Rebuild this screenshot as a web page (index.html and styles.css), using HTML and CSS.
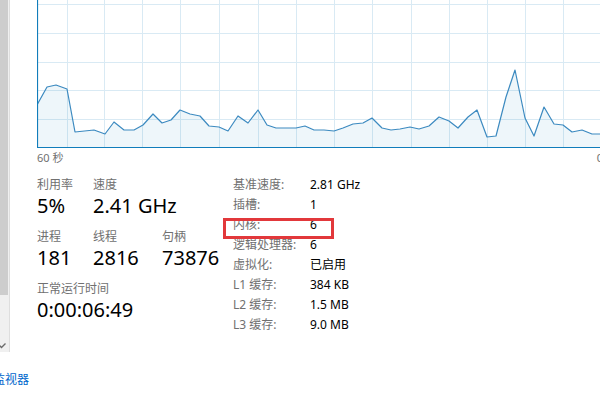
FILE: index.html
```html
<!DOCTYPE html>
<html lang="zh-CN">
<head>
<meta charset="utf-8">
<title>CPU</title>
<link rel="stylesheet" href="styles.css">
</head>
<body>
<div class="top">
  <aside class="sidebar">
    <div class="thumb"></div>
    <div class="track">
      <svg class="arrow" width="7" height="6" viewBox="0 0 7 6"><polyline points="0.5,2.5 2.5,4.5 6.5,0.5" fill="none" stroke="#6a6a6a" stroke-width="1.4"/></svg>
    </div>
  </aside>
  <main class="main">
    <svg class="chart" width="566" height="148" viewBox="37 0 566 148">
      <g class="grid" stroke="#d9eaf4" stroke-width="1">
        <line x1="37" y1="4.5" x2="603" y2="4.5"/>
        <line x1="37" y1="33.5" x2="603" y2="33.5"/>
        <line x1="37" y1="62.5" x2="603" y2="62.5"/>
        <line x1="37" y1="90.5" x2="603" y2="90.5"/>
        <line x1="37" y1="119.5" x2="603" y2="119.5"/>
        <line x1="67.5" y1="0" x2="67.5" y2="148"/>
        <line x1="104.5" y1="0" x2="104.5" y2="148"/>
        <line x1="142.5" y1="0" x2="142.5" y2="148"/>
        <line x1="180.5" y1="0" x2="180.5" y2="148"/>
        <line x1="219.5" y1="0" x2="219.5" y2="148"/>
        <line x1="258.5" y1="0" x2="258.5" y2="148"/>
        <line x1="296.5" y1="0" x2="296.5" y2="148"/>
        <line x1="334.5" y1="0" x2="334.5" y2="148"/>
        <line x1="372.5" y1="0" x2="372.5" y2="148"/>
        <line x1="411.5" y1="0" x2="411.5" y2="148"/>
        <line x1="449.5" y1="0" x2="449.5" y2="148"/>
        <line x1="487.5" y1="0" x2="487.5" y2="148"/>
        <line x1="525.5" y1="0" x2="525.5" y2="148"/>
        <line x1="563.5" y1="0" x2="563.5" y2="148"/>
      </g>
      <polygon fill="rgba(17,125,187,0.07)" points="37,105 47,87 56,85 67,89 75,132 94,130 105,134 114,122 124,130 134,130 143,125 153,114 162,123 171,120 180,110 190,114 200,116 209,126 219,127 228,131 238,116 248,123 258,110 267,125 276,128 286,128 296,128 305,126 314,130 324,130 334,131 343,128 353,124 363,123 372,118 382,128 391,130 400,129 410,127 419,129 429,126 439,117 449,121 458,128 468,117 477,110 487,137 496,136 506,97 515,70 525,118 534,136 544,107 554,124 563,125 572,132 582,130 592,134 603,134 603,147 37,147"/>
      <polyline fill="none" stroke="#3c8ac0" stroke-width="1.2" stroke-linejoin="round" points="37,105 47,87 56,85 67,89 75,132 94,130 105,134 114,122 124,130 134,130 143,125 153,114 162,123 171,120 180,110 190,114 200,116 209,126 219,127 228,131 238,116 248,123 258,110 267,125 276,128 286,128 296,128 305,126 314,130 324,130 334,131 343,128 353,124 363,123 372,118 382,128 391,130 400,129 410,127 419,129 429,126 439,117 449,121 458,128 468,117 477,110 487,137 496,136 506,97 515,70 525,118 534,136 544,107 554,124 563,125 572,132 582,130 592,134 603,134"/>
      <line x1="37.5" y1="0" x2="37.5" y2="148" stroke="#117dbb" stroke-width="1.2"/>
      <line x1="37" y1="147.5" x2="603" y2="147.5" stroke="#117dbb" stroke-width="1.2"/>
    </svg>
    <div class="axis">
      <span>60 秒</span>
      <span>0</span>
    </div>
    <div class="stats">
      <div class="left">
        <div class="row">
          <div class="stat s1"><div class="label">利用率</div><div class="value">5%</div></div>
          <div class="stat s2"><div class="label">速度</div><div class="value">2.41 GHz</div></div>
        </div>
        <div class="row">
          <div class="stat s1"><div class="label">进程</div><div class="value">181</div></div>
          <div class="stat s2"><div class="label">线程</div><div class="value">2816</div></div>
          <div class="stat"><div class="label">句柄</div><div class="value">73876</div></div>
        </div>
        <div class="row">
          <div class="stat"><div class="label">正常运行时间</div><div class="value">0:00:06:49</div></div>
        </div>
      </div>
      <div class="right">
        <span class="k">基准速度:</span><span class="v">2.81 GHz</span>
        <span class="k">插槽:</span><span class="v">1</span>
        <span class="k">内核:</span><span class="v">6</span>
        <span class="k">逻辑处理器:</span><span class="v">6</span>
        <span class="k">虚拟化:</span><span class="v">已启用</span>
        <span class="k">L1 缓存:</span><span class="v">384 KB</span>
        <span class="k">L2 缓存:</span><span class="v">1.5 MB</span>
        <span class="k">L3 缓存:</span><span class="v">9.0 MB</span>
      </div>
    </div>
  </main>
</div>
<div class="footer"><a class="link" href="#">打开资源监视器</a></div>
<div class="highlight"></div>
</body>
</html>
```

FILE: styles.css
```css
html, body {
  margin: 0;
  padding: 0;
  width: 600px;
  height: 400px;
  overflow: hidden;
  background: #ffffff;
  font-family: "Noto Sans", "Noto Sans CJK SC", sans-serif;
  color: #000;
}

.top {
  display: flex;
  align-items: flex-start;
  height: 352px;
}

.sidebar {
  width: 9px;
  height: 352px;
  border-right: 1px solid #dedede;
  background: #f0f0f0;
  display: flex;
  flex-direction: column;
  flex: none;
}

.thumb {
  width: 8px;
  height: 295px;
  background: #cdcdcd;
}

.track {
  flex: 1;
  display: flex;
  align-items: flex-end;
  padding-bottom: 3px;
}

.arrow {
  display: block;
  margin-left: -1px;
}

.main {
  margin-left: 27px;
  width: 566px;
  flex: none;
  display: flex;
  flex-direction: column;
}

.chart {
  display: block;
}

.axis {
  display: flex;
  justify-content: space-between;
  height: 27px;
  font-size: 11px;
  line-height: 20px;
  color: #707070;
}

.stats {
  display: flex;
}

.left {
  width: 196px;
  flex: none;
  padding-top: 2px;
  display: flex;
  flex-direction: column;
  gap: 10px;
}

.row {
  display: flex;
}

.stat {
  white-space: nowrap;
}

.s1 { width: 56px; flex: none; }
.s2 { width: 69px; flex: none; }

.label {
  font-size: 12px;
  line-height: 16px;
  color: #707070;
}

.value {
  font-size: 20px;
  line-height: 26px;
  color: #000;
}

.right {
  display: grid;
  grid-template-columns: 77px auto;
  grid-auto-rows: 20px;
  font-size: 12px;
  line-height: 20px;
  white-space: nowrap;
}

.k { color: #707070; }
.v { color: #000; }

.footer {
  margin-top: 20px;
  margin-left: -55px;
  font-size: 12px;
  line-height: 16px;
  white-space: nowrap;
}

.link {
  color: #0066cc;
  text-decoration: none;
}

.highlight {
  position: absolute;
  left: 223px;
  top: 218px;
  width: 105px;
  height: 15px;
  border: 3px solid #e2383b;
}
```
